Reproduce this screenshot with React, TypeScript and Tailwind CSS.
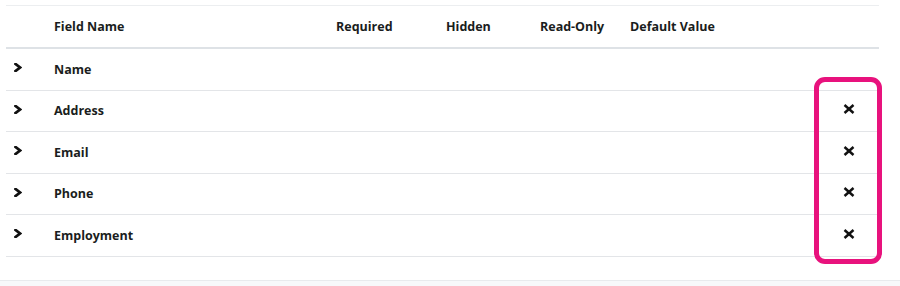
import React from "react";

const fields = [
  { name: "Name", removable: false },
  { name: "Address", removable: true },
  { name: "Email", removable: true },
  { name: "Phone", removable: true },
  { name: "Employment", removable: true },
];

const cols = "grid grid-cols-[36px_282px_110px_94px_90px_201px_60px]";

function Chevron() {
  return (
    <svg width="8" height="9" viewBox="0 0 8 9" className="-mt-[5px]">
      <polyline points="1.5,1 6,4.5 1.5,8" fill="none" stroke="#111" strokeWidth="2.8" strokeLinecap="square" strokeLinejoin="miter" />
    </svg>
  );
}

function Cross() {
  return (
    <svg width="12" height="10" viewBox="0 0 12 10">
      <line x1="1.5" y1="1" x2="10.5" y2="9" stroke="#111" strokeWidth="2.4" />
      <line x1="10.5" y1="1" x2="1.5" y2="9" stroke="#111" strokeWidth="2.4" />
    </svg>
  );
}

export default function App() {
  return (
    <div className="relative w-[900px] h-[286px] overflow-hidden bg-white font-['Open_Sans',sans-serif] text-[12.5px] font-bold text-[#1a1d20]">
      <div className="pt-[5px] pl-[6px]">
        <div className="w-[873px] border-t border-[#eceef0]">
          <div className={`${cols} h-[43px] items-center pt-[2px] border-b-[2px] border-[#dee2e6]`}>
            <div />
            <div className="pl-[12px]">Field Name</div>
            <div className="pl-[12px]">Required</div>
            <div className="pl-[12px]">Hidden</div>
            <div className="pl-[12px]">Read-Only</div>
            <div className="pl-[12px]">Default Value</div>
            <div />
          </div>
          {fields.map((f) => (
            <div key={f.name} className={`${cols} h-[41.5px] items-center pt-[2px] border-b border-[#e3e5e8]`}>
              <div className="pl-[8px] flex items-center">
                <Chevron />
              </div>
              <div className="pl-[12px]">{f.name}</div>
              <div />
              <div />
              <div />
              <div />
              <div className="flex justify-center -mt-[5px]">{f.removable && <Cross />}</div>
            </div>
          ))}
        </div>
      </div>
      <div className="mt-[23px] h-[10px] border-t border-[#e8eaed] bg-[#f7f8fa]" />
      <div className="absolute left-[814px] top-[77px] w-[68px] h-[187px] rounded-[11px] border-[5px] border-[#e8127d]" />
    </div>
  );
}
